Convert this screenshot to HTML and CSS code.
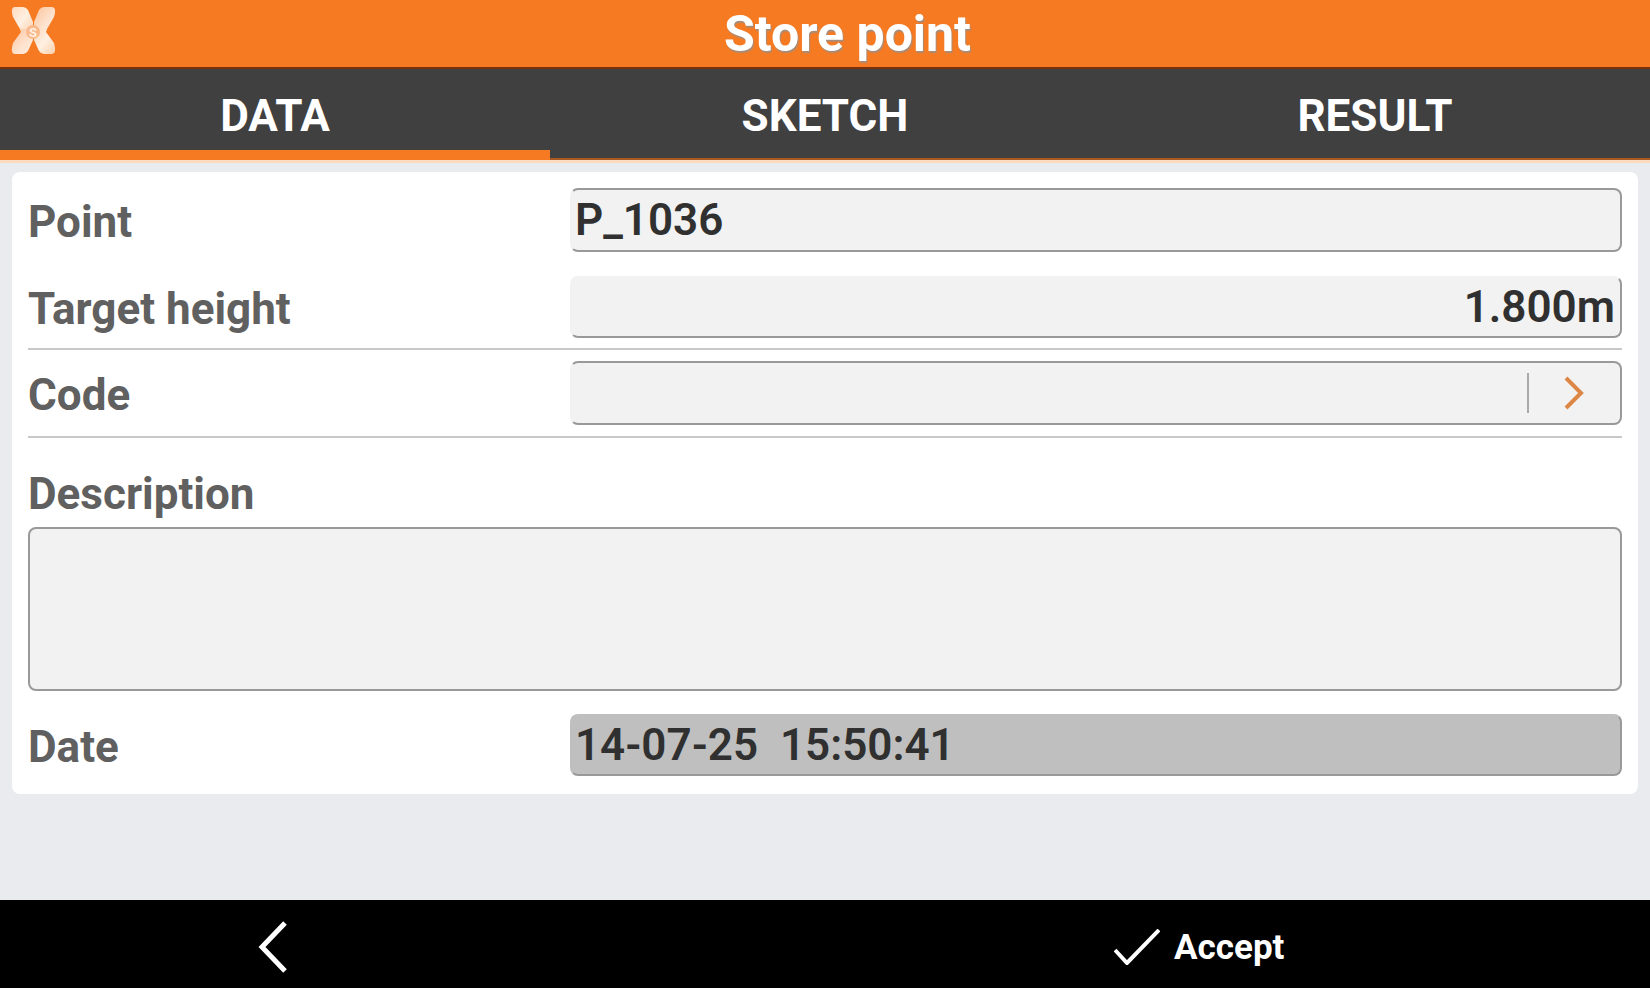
FILE: index.html
```html
<!DOCTYPE html>
<html lang="en">
<head>
    <meta charset="UTF-8">
    <meta name="viewport" content="width=device-width, initial-scale=1.0">
    <title>Store point</title>
    <link rel="stylesheet" href="styles.css">
</head>
<body>
    <header class="title-bar">
        <svg class="logo" viewBox="0 0 46 48" aria-hidden="true">
            <defs>
                <linearGradient id="armLight" x1="0" y1="0" x2="1" y2="1">
                    <stop offset="0" stop-color="#fdd9bd"/>
                    <stop offset="0.5" stop-color="#fff0e2"/>
                    <stop offset="1" stop-color="#fcd0ae"/>
                </linearGradient>
                <linearGradient id="armDark" x1="0" y1="0" x2="1" y2="1">
                    <stop offset="0" stop-color="#fbc39b"/>
                    <stop offset="0.6" stop-color="#fee3cf"/>
                    <stop offset="1" stop-color="#fff0e2"/>
                </linearGradient>
            </defs>
            <path fill="url(#armLight)" d="M4 0h8q3 0 5 3l5 12v11H11L9 22 2 10Q-1 0 4 0z"/>
            <path fill="url(#armDark)" d="M41 0h-8q-3 0-5 3l-5 12v11h11l2-4 7-12q3-10-2-10z"/>
            <path fill="url(#armDark)" d="M4 47h8q3 0 5-3l5-11V22H9l1 3-8 11q-3 11 2 11z"/>
            <path fill="url(#armLight)" d="M41 47h-8q-3 0-5-3l-5-11V22h13l-1 3 8 11q3 11-2 11z"/>
            <circle cx="22" cy="25" r="7" fill="#f9b98a"/>
            <text class="logo-text" x="22" y="30" text-anchor="middle">S</text>
        </svg>
        <h1>Store point</h1>
    </header>

    <nav class="tabs" role="tablist">
        <button class="tab active" role="tab" aria-selected="true">DATA</button>
        <button class="tab" role="tab" aria-selected="false">SKETCH</button>
        <button class="tab" role="tab" aria-selected="false">RESULT</button>
    </nav>

    <main class="content">
        <form class="panel">
            <div class="row">
                <label for="point">Point</label>
                <input class="field" type="text" id="point" value="P_1036">
            </div>
            <div class="row">
                <label for="height">Target height</label>
                <input class="field flat number" type="text" id="height" value="1.800m">
            </div>
            <div class="row lined">
                <label for="code">Code</label>
                <div class="field picker">
                    <input type="text" id="code">
                    <button type="button" class="picker-button" aria-label="Select code">
                        <svg viewBox="0 0 20 34" width="20" height="34">
                            <path d="M2 2l15 15L2 32" fill="none" stroke="#dd8746" stroke-width="4"/>
                        </svg>
                    </button>
                </div>
            </div>
            <div class="block">
                <label for="description">Description</label>
                <textarea class="field" id="description"></textarea>
            </div>
            <div class="row">
                <label for="date">Date</label>
                <input class="field flat readonly" type="text" id="date" value="14-07-25  15:50:41" readonly>
            </div>
        </form>
    </main>

    <footer class="bottom-bar">
        <button class="back" aria-label="Back">
            <svg viewBox="0 0 30 52" width="30" height="52">
                <path d="M27 2L4 26l23 24" fill="none" stroke="#fff" stroke-width="5"/>
            </svg>
        </button>
        <button class="accept">
            <svg viewBox="0 0 46 36" width="46" height="36">
                <path d="M1 21l12 13L45 1" fill="none" stroke="#fff" stroke-width="4"/>
            </svg>
            Accept
        </button>
    </footer>
</body>
</html>
```

FILE: styles.css
```css
:root {
    --orange: #f67a22;
    --dark: #404040;
    --bg-color: #e9ebee;
    --field-bg: #f2f2f2;
    --field-border: #999;
    --label-color: #606060;
    --text-color: #303030;
}
* {
    box-sizing: border-box;
}
body {
    margin: 0;
    min-height: 100vh;
    display: flex;
    flex-direction: column;
    font-family: Roboto, Arial, sans-serif;
    font-weight: 700;
    font-size: 44px;
    background: var(--bg-color);
    color: var(--text-color);
}
button, input, textarea {
    font: inherit;
    color: inherit;
}
button {
    background: none;
    border: none;
    padding: 0;
    cursor: pointer;
}
.title-bar {
    display: flex;
    align-items: center;
    height: 69px;
    padding-left: 11px;
    background: var(--orange);
    border-bottom: 2px solid #7a300a;
}
.logo {
    width: 46px;
    height: 48px;
    margin-bottom: 6px;
}
.logo-text {
    font-size: 13px;
    fill: #fff0e2;
}
h1 {
    flex: 1;
    margin: 0;
    padding-right: 12px;
    font-size: 50px;
    line-height: 64px;
    text-align: center;
    color: #fff;
    text-shadow: 1px 2px 1px #a88c78;
}
.tabs {
    display: grid;
    grid-template-columns: repeat(3, 1fr);
    height: 94px;
    background: var(--dark);
    border-bottom: 3px solid #fbdcc0;
}
.tab {
    color: #fff;
    padding-top: 4px;
    border-bottom: 2px solid #a85a22;
}
.tab.active {
    padding-top: 12px;
    border-bottom: 10px solid var(--orange);
}
.content {
    flex: 1;
    padding: 9px 12px;
}
.panel {
    display: flex;
    flex-direction: column;
    padding: 2px 16px 8px;
    background: #fff;
    border-radius: 8px;
}
.row {
    display: grid;
    grid-template-columns: 34fr 66fr;
    align-items: center;
    padding: 14px 0 10px;
}
.row label, .block label {
    color: var(--label-color);
}
.row label {
    padding-top: 3px;
}
.lined {
    padding: 11px 0;
    border-top: 2px solid #c8c8c8;
    border-bottom: 2px solid #c8c8c8;
}
.field {
    width: 100%;
    min-width: 0;
    height: 64px;
    padding: 0 5px 0 3px;
    font-weight: 600;
    background: var(--field-bg);
    border: 2px solid var(--field-border);
    border-radius: 8px;
    outline: none;
}
.row .field {
    border-left-color: var(--field-bg);
}
.row .flat {
    height: 62px;
    border-top-color: var(--field-bg);
}
.number {
    text-align: right;
}
.row .readonly {
    background: #bfbfbf;
    border-top-color: #bfbfbf;
    border-left-color: #bfbfbf;
}
.picker {
    display: flex;
    align-items: center;
    padding: 0;
}
.picker input {
    flex: 1;
    min-width: 0;
    background: none;
    border: none;
    outline: none;
}
.picker-button {
    display: flex;
    align-items: center;
    justify-content: center;
    width: 93px;
    height: 40px;
    border-left: 2px solid #aaa;
}
.block {
    display: flex;
    flex-direction: column;
    padding-top: 30px;
}
.block label {
    line-height: 52px;
    padding-bottom: 7px;
}
.block .field {
    height: 164px;
    margin-bottom: 9px;
    resize: none;
}
.bottom-bar {
    display: grid;
    grid-template-columns: repeat(3, 1fr);
    height: 88px;
    background: #000;
    color: #fff;
}
.back, .accept {
    display: flex;
    align-items: center;
    color: #fff;
}
.back {
    justify-content: center;
    padding: 6px 5px 0 0;
}
.accept {
    grid-column: 3;
    gap: 14px;
    padding: 6px 0 0 14px;
    font-size: 35px;
}
```
